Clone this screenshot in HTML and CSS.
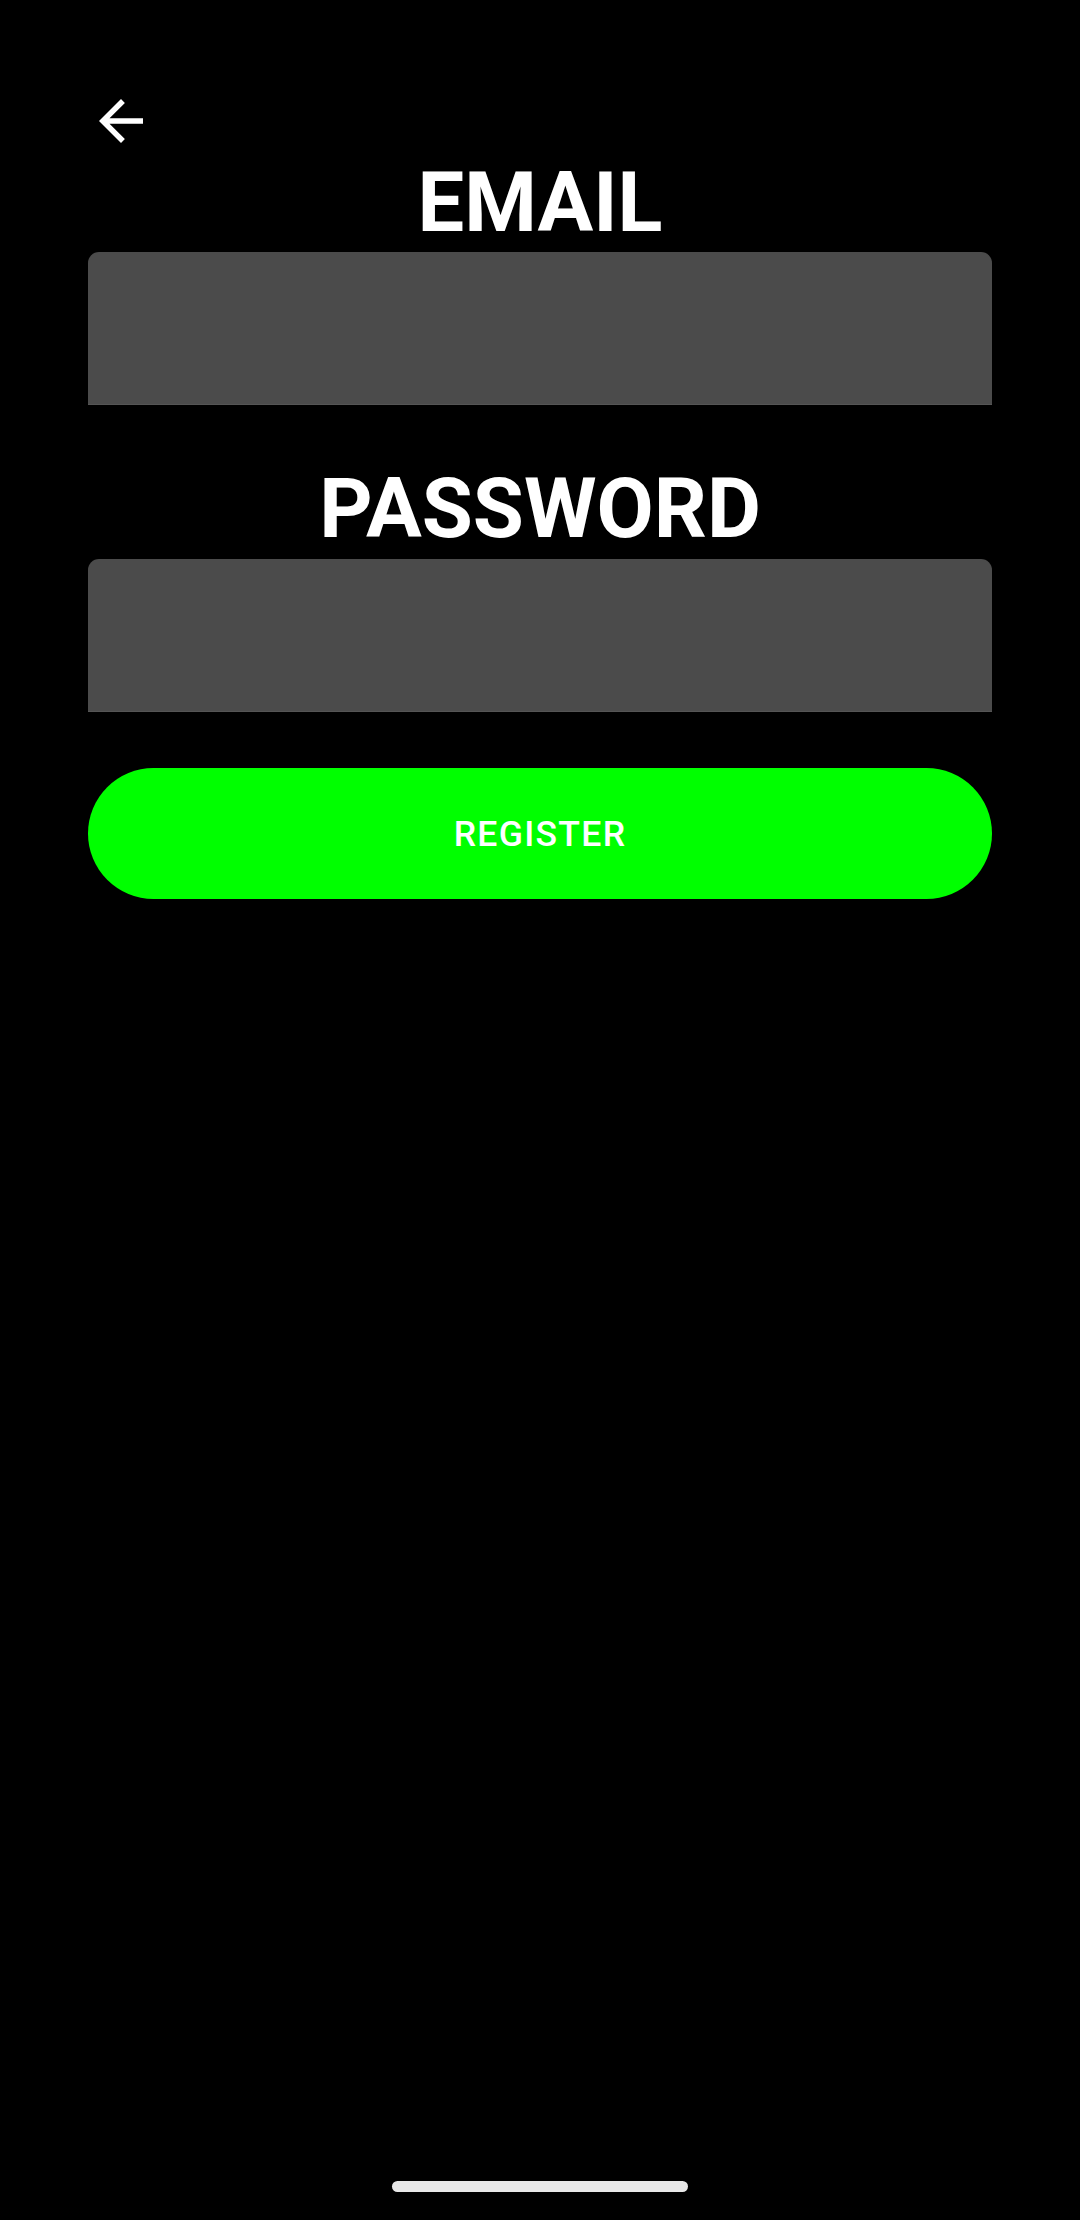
FILE: index.html
```html
<!DOCTYPE html>
<html lang="en">
<head>
<meta charset="utf-8">
<title>Register</title>
<link rel="stylesheet" href="styles.css">
</head>
<body>
<main class="screen">
  <div class="toolbar">
    <button class="back" aria-label="Back">
      <svg viewBox="0 0 24 24" width="66" height="66"><path fill="#ffffff" d="M20 11H7.83l5.59-5.59L12 4l-8 8 8 8 1.41-1.41L7.83 13H20v-2z"/></svg>
    </button>
  </div>
  <form class="form">
    <label class="label" for="email">EMAIL</label>
    <div class="field"><input id="email" class="input" type="email"></div>
    <label class="label label-spaced" for="password">PASSWORD</label>
    <div class="field"><input id="password" class="input" type="password"></div>
    <button type="button" class="register">REGISTER</button>
  </form>
  <div class="spacer"></div>
  <div class="nav-handle"></div>
</main>
</body>
</html>
```
FILE: styles.css
```css
html, body {
  margin: 0;
  padding: 0;
  background: #000000;
}
.screen {
  width: 1080px;
  height: 2220px;
  display: flex;
  flex-direction: column;
  font-family: Roboto, "Noto Sans", sans-serif;
  color: #ffffff;
  box-sizing: border-box;
}
.toolbar {
  display: flex;
  padding: 88px 0 0 88px;
  height: 66px;
}
.back {
  width: 66px;
  height: 66px;
  padding: 0;
  border: 0;
  background: transparent;
  display: block;
}
.back svg { display: block; }
.form {
  display: flex;
  flex-direction: column;
  padding: 0 88px;
}
.label {
  font-size: 83px;
  font-weight: 700;
  line-height: 97px;
  text-align: center;
  color: #ffffff;
  margin-bottom: 1px;
}
.label-spaced {
  margin-top: 55px;
  margin-bottom: 2px;
}
.field {
  height: 153px;
  background: #4b4b4b;
  border-radius: 11px 11px 0 0;
  box-sizing: border-box;
  border-bottom: 1px solid #555555;
}
.input {
  width: 100%;
  height: 100%;
  border: 0;
  background: transparent;
  outline: none;
}
.register {
  margin-top: 56px;
  height: 131px;
  border: 0;
  border-radius: 66px;
  background: #00ff00;
  color: #ffffff;
  font-family: Roboto, "Noto Sans", sans-serif;
  font-size: 35.5px;
  font-weight: 500;
  letter-spacing: 1.3px;
  padding: 0;
}
.spacer { flex: 1; }
.nav-handle {
  align-self: center;
  width: 296px;
  height: 11px;
  border-radius: 6px;
  background: #e8e8e8;
  margin-bottom: 28px;
}
```
